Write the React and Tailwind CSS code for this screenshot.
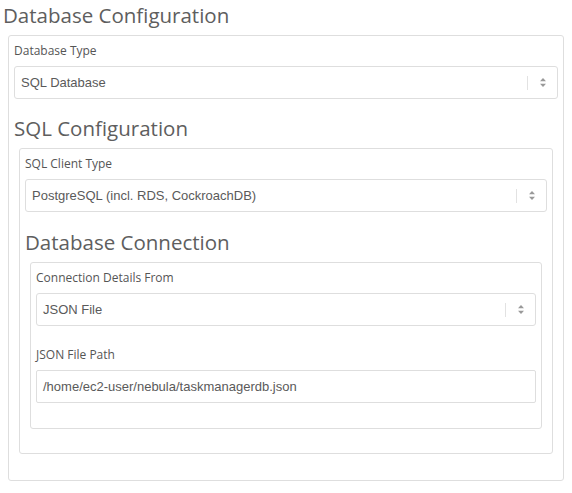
import React from 'react';

const heading = "text-[20.5px] leading-[28px] text-[#5e5e5e] mb-[6px] font-['Open_Sans',sans-serif]";
const label = "block text-[12px] leading-[17px] text-[#555] mb-[7px] font-['Open_Sans',sans-serif]";
const box = 'border border-[#dedede] rounded-[3px] px-[5px] pt-[6px]';

const Arrows = () => (
  <svg width="6" height="9" viewBox="0 0 6 9" className="text-[#999]">
    <path d="M3 0 L6 3.2 L0 3.2 Z" fill="currentColor" />
    <path d="M3 9 L6 5.8 L0 5.8 Z" fill="currentColor" />
  </svg>
);

const Select = ({ value }) => (
  <div className="h-[33px] border border-[#dedede] rounded-[3px] bg-white flex items-center pl-[6px] text-[13px] text-[#5a5a5a] font-['Liberation_Sans',Arial,sans-serif]">
    <span className="flex-1">{value}</span>
    <span className="w-px h-[14px] bg-[#e2e2e2]" />
    <span className="w-[29px] flex justify-center">
      <Arrows />
    </span>
  </div>
);

const Input = ({ value }) => (
  <div className="h-[33px] border border-[#dedede] rounded-[2px] bg-white flex items-center pl-[6px] text-[13px] text-[#5a5a5a] font-['Liberation_Sans',Arial,sans-serif]">
    {value}
  </div>
);

export default function App() {
  return (
    <div className="bg-white min-h-[493px] px-[3px] pt-[1px]">
      <h2 className={heading}>Database Configuration</h2>
      <div className={box + ' mx-[5px] pb-[26px]'}>
        <div className="mb-[15px]">
          <label className={label}>Database Type</label>
          <Select value="SQL Database" />
        </div>

        <h3 className={heading}>SQL Configuration</h3>
        <div className={box + ' mx-[5px] pb-[24px]'}>
          <div className="mb-[16px]">
            <label className={label}>SQL Client Type</label>
            <Select value="PostgreSQL (incl. RDS, CockroachDB)" />
          </div>

          <h4 className={heading}>Database Connection</h4>
          <div className={box + ' mx-[5px] pb-[25px]'}>
            <div className="mb-[20px]">
              <label className={label}>Connection Details From</label>
              <Select value="JSON File" />
            </div>
            <div>
              <label className={label}>JSON File Path</label>
              <Input value="/home/ec2-user/nebula/taskmanagerdb.json" />
            </div>
          </div>
        </div>
      </div>
    </div>
  );
}
